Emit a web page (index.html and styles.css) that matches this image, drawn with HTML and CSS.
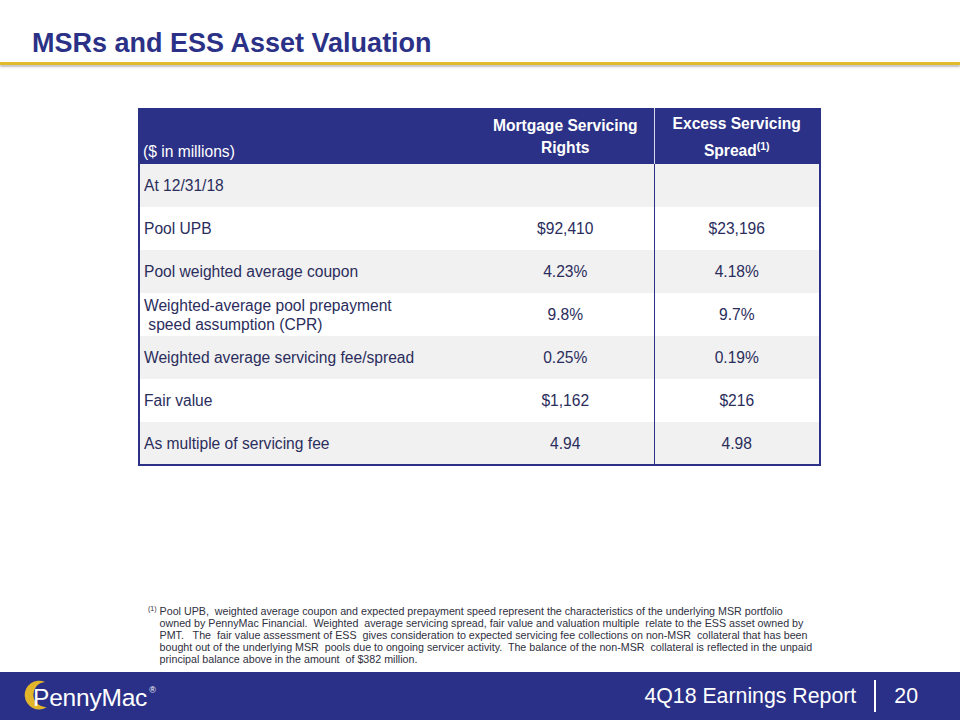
FILE: index.html
```html
<!DOCTYPE html>
<html>
<head>
<meta charset="utf-8">
<link rel="stylesheet" href="styles.css">
</head>
<body>
<div class="slide">
  <header class="top">
    <h1 class="title">MSRs and ESS Asset Valuation</h1>
    <div class="rule"></div>
  </header>
  <main class="main">
    <table class="val">
      <thead>
        <tr>
          <th class="c-label">($ in millions)</th>
          <th class="c-msr">Mortgage Servicing<br>Rights</th>
          <th class="c-ess">Excess Servicing<br>Spread<sup>(1)</sup></th>
        </tr>
      </thead>
      <tbody>
        <tr class="alt"><td>At 12/31/18</td><td></td><td class="last"></td></tr>
        <tr><td>Pool UPB</td><td class="num">$92,410</td><td class="num last">$23,196</td></tr>
        <tr class="alt"><td>Pool weighted average coupon</td><td class="num">4.23%</td><td class="num last">4.18%</td></tr>
        <tr><td class="two">Weighted-average pool prepayment<br>&nbsp;speed assumption (CPR)</td><td class="num">9.8%</td><td class="num last">9.7%</td></tr>
        <tr class="alt"><td>Weighted average servicing fee/spread</td><td class="num">0.25%</td><td class="num last">0.19%</td></tr>
        <tr><td>Fair value</td><td class="num">$1,162</td><td class="num last">$216</td></tr>
        <tr class="alt"><td>As multiple of servicing fee</td><td class="num">4.94</td><td class="num last">4.98</td></tr>
      </tbody>
    </table>
  </main>
  <section class="note">
    <sup class="fn">(1)</sup>
    <p><span class="ln">Pool UPB,&nbsp; weighted average coupon and expected prepayment speed represent the characteristics of the underlying MSR portfolio</span>
    <span class="ln">owned by PennyMac Financial.&nbsp; Weighted&nbsp; average servicing spread, fair value and valuation multiple&nbsp; relate to the ESS asset owned by</span>
    <span class="ln">PMT.&nbsp;&nbsp; The&nbsp; fair value assessment of ESS&nbsp; gives consideration to expected servicing fee collections on non-MSR&nbsp; collateral that has been</span>
    <span class="ln">bought out of the underlying MSR&nbsp; pools due to ongoing servicer activity.&nbsp; The balance of the non-MSR&nbsp; collateral is reflected in the unpaid</span>
    <span class="ln">principal balance above in the amount&nbsp; of $382 million.</span></p>
  </section>
  <footer class="foot">
    <div class="logo">
      <svg class="ring" width="36" height="36" viewBox="0 0 40 40">
        <path d="M29 5.5 A16 16 0 1 0 31 33.5 A13.5 13.5 0 1 1 29 5.5 Z" fill="#E3B52A"/>
      </svg>
      <span class="brand">PennyMac</span><span class="reg">®</span>
    </div>
    <div class="report">
      <span class="rtitle">4Q18 Earnings Report</span>
      <span class="divider"></span>
      <span class="page">20</span>
    </div>
  </footer>
</div>
</body>
</html>
```

FILE: styles.css
```css
* { box-sizing: border-box; }
html, body { margin: 0; padding: 0; }
body {
  font-family: "Liberation Sans", Arial, sans-serif;
  background: #fff;
}
.slide {
  width: 960px;
  height: 720px;
  display: flex;
  flex-direction: column;
  overflow: hidden;
}
.top { padding-top: 28px; }
.title {
  margin: 0 0 0 32px;
  font-size: 27px;
  line-height: 30px;
  font-weight: bold;
  color: #2B3186;
}
.rule {
  margin-top: 4px;
  height: 3px;
  background: #E1BC2F;
  box-shadow: 0 2px 2px rgba(120,120,120,0.45);
}
.main {
  flex: 1;
  padding: 43px 0 0 138px;
}
.val {
  border-collapse: collapse;
  width: 683px;
  font-size: 15.6px;
  color: #2B2D5C;
  border-left: 2px solid #2B3186;
  border-right: 2px solid #2B3186;
  border-bottom: 2px solid #2B3186;
}
.val thead tr { background: #2B3186; height: 56px; }
.val th {
  color: #fff;
  font-size: 15.6px;
  line-height: 22px;
  padding: 0;
}
.c-label {
  text-align: left;
  vertical-align: bottom;
  font-weight: normal;
  padding: 0 0 1px 3px !important;
  width: 338px;
}
.c-msr {
  width: 177px;
  text-align: center;
  vertical-align: middle;
  font-weight: bold;
  padding-top: 2px !important;
}
.c-ess {
  text-align: center;
  vertical-align: top;
  font-weight: bold;
  border-left: 1px solid #d8d8e8;
  line-height: 27px !important;
  padding-top: 2px !important;
}
.c-ess sup { font-size: 10.5px; line-height: 0; }
.val tbody tr { height: 43px; background: #fff; }
.val tbody tr.alt { background: #F1F1F1; }
.val td {
  padding: 0 0 0 4px;
  vertical-align: middle;
  line-height: 19px;
}
.val td.num { text-align: center; padding: 0; }
.val td.last { border-left: 1px solid #2B3186; }
.note {
  display: flex;
  gap: 3px;
  padding: 0 100px 0 148px;
  margin-bottom: 7px;
  color: #2F3040;
}
.fn { font-size: 7px; line-height: 12px; vertical-align: top; position: relative; top: -2px; }
.note p {
  margin: 0;
  font-size: 10.7px;
  line-height: 12px;
}
.ln { display: block; white-space: nowrap; }
.foot {
  height: 48px;
  background: #2A3087;
  display: flex;
  align-items: center;
  justify-content: space-between;
  padding: 0 42px 0 18px;
  color: #fff;
}
.logo { display: flex; align-items: center; position: relative; height: 48px; }
.ring { position: absolute; left: 1px; top: 5px; }
.brand {
  margin-left: 15px;
  font-size: 24.5px;
  letter-spacing: -0.2px;
  line-height: 48px;
  position: relative;
  top: 2px;
}
.reg { font-size: 9px; position: relative; top: -6px; margin-left: 2px; }
.report { display: flex; align-items: center; }
.rtitle { font-size: 21.3px; }
.divider {
  width: 2px;
  height: 32px;
  background: #fff;
  margin: 0 18px 0 18px;
}
.page { font-size: 21.3px; }
```
